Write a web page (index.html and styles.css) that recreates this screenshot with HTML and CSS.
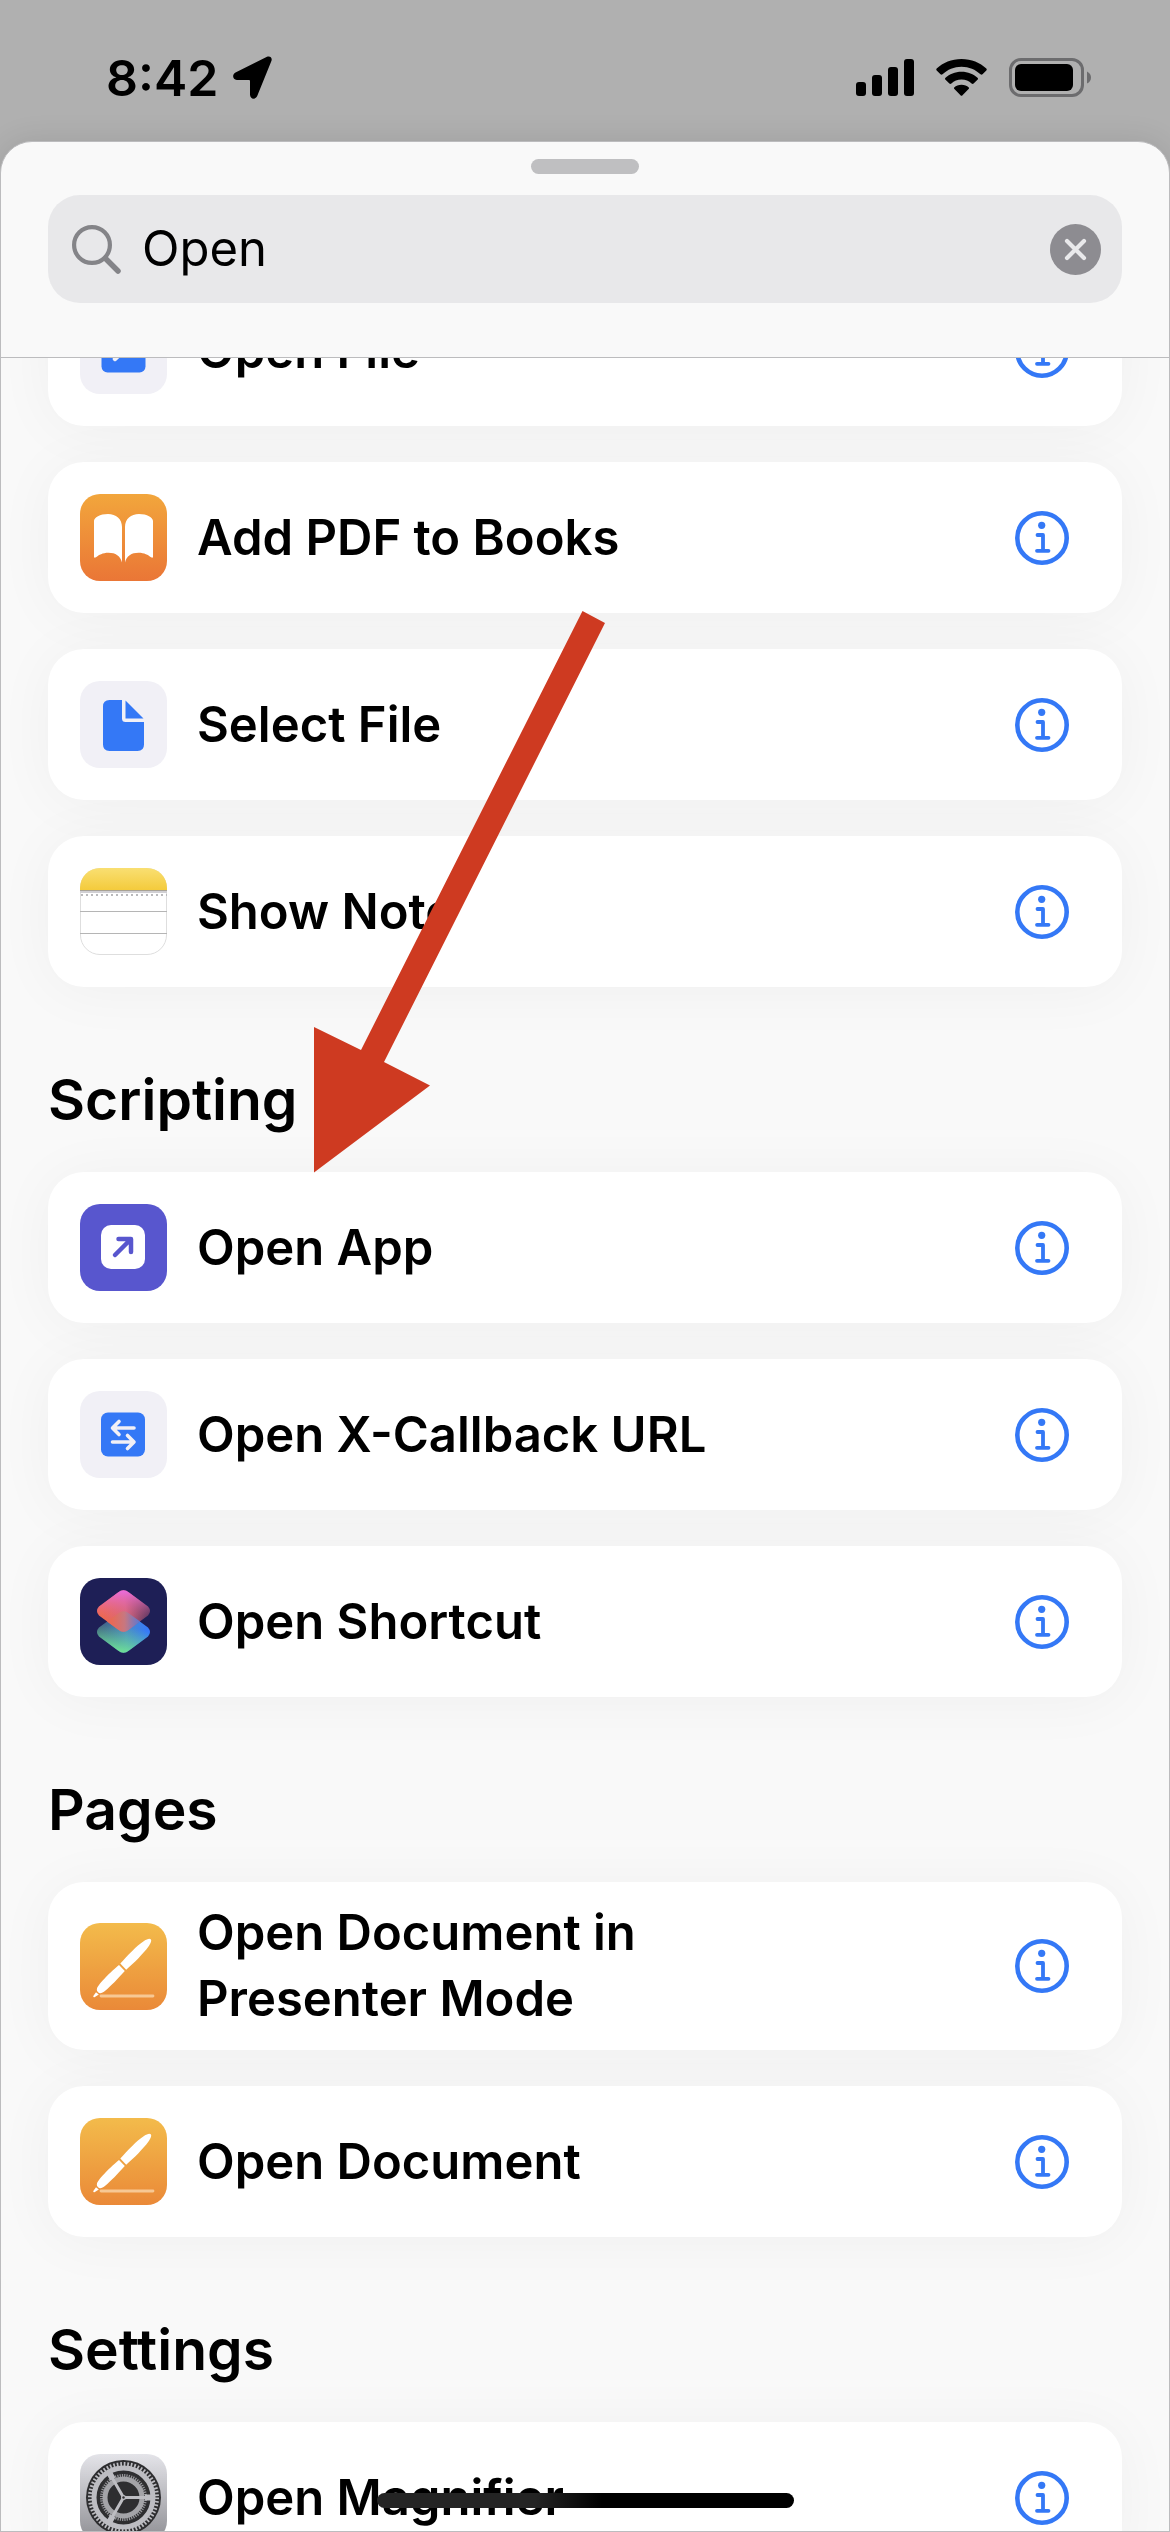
FILE: index.html
```html
<!DOCTYPE html>
<html lang="en">
<head>
<meta charset="utf-8">
<meta name="viewport" content="width=device-width, initial-scale=1">
<title>Shortcuts – Add Action</title>
<link rel="stylesheet" href="styles.css">
</head>
<body>
<svg class="defs" aria-hidden="true">
  <defs>
    <linearGradient id="books-bg" x1="0" y1="0" x2="0" y2="1"><stop offset="0" stop-color="#f2a63c"/><stop offset="1" stop-color="#ea7636"/></linearGradient>
    <linearGradient id="notes-bg" x1="0" y1="0" x2="0" y2="1"><stop offset="0" stop-color="#f9df72"/><stop offset="1" stop-color="#f4cb3c"/></linearGradient>
    <linearGradient id="pages-bg" x1="0" y1="0" x2="0" y2="1"><stop offset="0" stop-color="#f3bb4b"/><stop offset="1" stop-color="#ea8938"/></linearGradient>
    <linearGradient id="gear-bg" x1="0" y1="0" x2="0" y2="1"><stop offset="0" stop-color="#e4e4e9"/><stop offset="1" stop-color="#8e8e93"/></linearGradient>
    <linearGradient id="sc-base" x1="0.1" y1="0.6" x2="1" y2="0.5"><stop offset="0" stop-color="#ee684f"/><stop offset="0.5" stop-color="#d6657e"/><stop offset="1" stop-color="#4a305f"/></linearGradient>
    <linearGradient id="sc-pink" x1="0.5" y1="0" x2="0.5" y2="1"><stop offset="0" stop-color="#ea6be0"/><stop offset="0.7" stop-color="#e56a80" stop-opacity="0"/></linearGradient>
    <linearGradient id="sc-blue" x1="0" y1="0.5" x2="1" y2="0.5"><stop offset="0" stop-color="#3c4b78"/><stop offset="0.55" stop-color="#4b8bc4"/><stop offset="1" stop-color="#3478ff"/></linearGradient>
    <linearGradient id="sc-green" x1="0.6" y1="0.3" x2="0.4" y2="1"><stop offset="0.1" stop-color="#5fd39b" stop-opacity="0"/><stop offset="1" stop-color="#72e694"/></linearGradient>
    <linearGradient id="sc-overlap" x1="0.15" y1="0.5" x2="1" y2="0.5"><stop offset="0" stop-color="#e86a55"/><stop offset="0.45" stop-color="#c57a80"/><stop offset="1" stop-color="#4f7fe6"/></linearGradient>
    <symbol id="info" viewBox="0 0 54 54">
      <circle cx="27" cy="27" r="24.7" fill="none" stroke="#3478f6" stroke-width="4.6"/>
      <circle cx="26.7" cy="14.3" r="3.6" fill="#3478f6"/>
      <path d="M22.5 24H28V39.8M22 39.8H33.5" fill="none" stroke="#3478f6" stroke-width="3.8" stroke-linecap="round" stroke-linejoin="round"/>
    </symbol>
    <symbol id="pages" viewBox="0 0 87 87">
      <rect width="87" height="87" rx="20" fill="url(#pages-bg)"/>
      <path d="M21 73H73" stroke="#f7c894" stroke-width="2.8" stroke-linecap="round"/>
      <path d="M40.3 40.6C47 33 57 22.500 64 18C67 16 69.500 15 70.700 16.200C72 17.500 70.500 20.500 68.500 23.500C63 31 54 40 46.200 46.700ZM39 42L44.800 48C38 55.500 31 63 25.500 67.500C23 69.500 21 70.600 19.800 70.200C17.500 69.500 16.300 67.500 17 65.500C18.500 61 31 48.500 39 42ZM16 69.200L18.800 71.500L14.500 74.200Q13 74.500 13.300 73Z" fill="#fff"/>
    </symbol>
  </defs>
</svg>

<div class="status">
  <span class="time">8:42</span>
  <svg class="location" viewBox="0 0 39 43" width="39" height="43" aria-hidden="true"><path d="M34 .8 2.500 16.600C-1.200 18.500-.4 24 3.800 24H16Q17 24 17 25V38.500C17 43.500 22.500 44 24.200 40L38.400 5C39.600 1.700 37-.6 34 .8Z"/></svg>
  <div class="indicators">
    <svg viewBox="0 0 58 38" width="58" height="38" aria-hidden="true"><rect y="23" width="10" height="14" rx="3"/><rect x="16" y="16" width="10" height="21" rx="3"/><rect x="32" y="8" width="10" height="29" rx="3"/><rect x="48" width="10" height="37" rx="3"/></svg>
    <svg viewBox="0 0 51 38" width="51" height="38" aria-hidden="true"><path d="M25.500 0C35.500 0 44 3.600 50.300 9.600Q51.200 10.500 50.300 11.500L46.500 15.300Q45.500 16.200 44.500 15.300C39.500 10.500 33 7.700 25.500 7.700S11.500 10.500 6.500 15.300Q5.500 16.200 4.500 15.300L.7 11.500Q-.2 10.500.7 9.600C7 3.600 15.500 0 25.500 0ZM25.500 12.800C32 12.800 37.500 15.200 41.500 18.800Q42.500 19.800 41.500 20.700L37.600 24.500Q36.700 25.400 35.600 24.500C33 22 29.500 20.500 25.500 20.500S18 22 15.400 24.500Q14.300 25.400 13.400 24.500L9.500 20.700Q8.500 19.800 9.500 18.800C13.500 15.200 19 12.800 25.500 12.800ZM25.500 25.800C28.500 25.800 31 26.800 32.600 28.300Q33.400 29.200 32.600 30L26.500 36.200Q25.500 37.200 24.500 36.200L18.400 30Q17.600 29.200 18.400 28.300C20 26.800 22.500 25.800 25.500 25.800Z"/></svg>
    <svg viewBox="0 0 82 39" width="82" height="39" aria-hidden="true"><rect x="1.500" y="1.500" width="72" height="36" rx="10.500" fill="none" stroke="#6c6c6e" stroke-width="3"/><rect x="6" y="6" width="58" height="27" rx="6"/><path d="M78 13.500Q82 15.500 82 19.500T78 25.500Z" fill="#6c6c6e"/></svg>
  </div>
</div>

<main class="sheet">
  <header class="sheet-header">
    <div class="grabber"></div>
    <form class="search" role="search">
      <svg viewBox="0 0 49 49" width="49" height="49" aria-hidden="true"><g fill="none" stroke="#848488" stroke-linecap="round"><circle cx="20" cy="20" r="17.900" stroke-width="4.200"/><path d="M33.500 33.500 46 46" stroke-width="5.500"/></g></svg>
      <input type="search" value="Open" aria-label="Search actions">
      <button type="reset" aria-label="Clear search">
        <svg viewBox="0 0 51 51" width="51" height="51"><circle cx="25.500" cy="25.500" r="25.500" fill="#8d8c91"/><path d="M17 17 34 34M34 17 17 34" stroke="#e9e9eb" stroke-width="4.200" stroke-linecap="round"/></svg>
      </button>
    </form>
  </header>

  <div class="results">
    <ul class="list list-scrolled">
      <li class="card">
        <svg class="icon" viewBox="0 0 87 87"><rect width="87" height="87" rx="20" fill="#f1f0f6"/><rect x="21.500" y="21.500" width="44" height="44" rx="6" fill="#3478f6"/><path d="M35 52 51 36M38.500 35.500H51.500V48.500" fill="none" stroke="#f1f0f6" stroke-width="4.500" stroke-linecap="round" stroke-linejoin="round"/></svg>
        <span class="name">Open File</span>
        <button class="info" aria-label="About Open File"><svg width="54" height="54"><use href="#info"/></svg></button>
      </li>
      <li class="card">
        <svg class="icon" viewBox="0 0 87 87"><rect width="87" height="87" rx="20" fill="url(#books-bg)"/><path d="M14 27C14 23.500 20 20 28 20C36 20 42 25 42 33V68.500C40.500 62 35.500 58.800 28.500 58.800C22.500 58.800 19 61 16 63.300Q14 64.500 14 62.500ZM73 27C73 23.500 67 20 59 20C51 20 45 25 45 33V68.500C46.500 62 51.500 58.800 58.500 58.800C64.500 58.800 68 61 71 63.300Q73 64.500 73 62.500Z" fill="#fff"/></svg>
        <span class="name">Add PDF to Books</span>
        <button class="info" aria-label="About Add PDF to Books"><svg width="54" height="54"><use href="#info"/></svg></button>
      </li>
      <li class="card">
        <svg class="icon" viewBox="0 0 87 87"><rect width="87" height="87" rx="20" fill="#f1f0f6"/><path d="M29.500 19H42V37.500Q42 41 45.500 41H64V63.500Q64 70 57.500 70H29.500Q23 70 23 63.500V25.500Q23 19 29.500 19ZM45.500 19.500 63.500 37.500H45.500Z" fill="#3478f6"/></svg>
        <span class="name">Select File</span>
        <button class="info" aria-label="About Select File"><svg width="54" height="54"><use href="#info"/></svg></button>
      </li>
      <li class="card">
        <svg class="icon" viewBox="0 0 87 87"><rect x=".5" y=".5" width="86" height="86" rx="19.500" fill="#fff" stroke="#dedede"/><path d="M0 22V20A20 20 0 0 1 20 0H67A20 20 0 0 1 87 20V22Z" fill="url(#notes-bg)"/><path d="M0 22.500H87" stroke="#a8a294"/><path d="M0 24H87" stroke="#d0cfd3" stroke-width="2"/><path d="M1 27H87" stroke="#b9b9bb" stroke-width="2" stroke-dasharray="2 3"/><path d="M0 43.500H87M0 65.500H87" stroke="#b5b5b5"/></svg>
        <span class="name">Show Note</span>
        <button class="info" aria-label="About Show Note"><svg width="54" height="54"><use href="#info"/></svg></button>
      </li>
    </ul>

    <h2>Scripting</h2>
    <ul class="list">
      <li class="card">
        <svg class="icon" viewBox="0 0 87 87"><rect width="87" height="87" rx="20" fill="#5856ce"/><rect x="21" y="21" width="44" height="44" rx="10" fill="#fff"/><path d="M35 51 50.500 35.500M38.500 35H51V48" fill="none" stroke="#5856ce" stroke-width="4.500" stroke-linecap="round" stroke-linejoin="round"/></svg>
        <span class="name">Open App</span>
        <button class="info" aria-label="About Open App"><svg width="54" height="54"><use href="#info"/></svg></button>
      </li>
      <li class="card">
        <svg class="icon" viewBox="0 0 87 87"><rect width="87" height="87" rx="20" fill="#f1f0f6"/><rect x="21" y="21.500" width="44" height="44" rx="7" fill="#3478f6"/><path d="M54 37H33M39 30.500 32.500 37 39 43.500M32.500 51H53.500M47.500 44.500 54 51 47.500 57.500" fill="none" stroke="#f1f0f6" stroke-width="3.600" stroke-linecap="round" stroke-linejoin="round"/></svg>
        <span class="name">Open X-Callback URL</span>
        <button class="info" aria-label="About Open X-Callback URL"><svg width="54" height="54"><use href="#info"/></svg></button>
      </li>
      <li class="card">
        <svg class="icon" viewBox="0 0 87 87"><rect width="87" height="87" rx="20" fill="#1e1f56"/><path d="M38 35.500Q43.500 31 49 35.500L68 49.500Q72 54 68 58.500L49 72.500Q43.500 77 38 72.500L19 58.500Q15 54 19 49.500Z" fill="url(#sc-blue)"/><path d="M38 35.500Q43.500 31 49 35.500L68 49.500Q72 54 68 58.500L49 72.500Q43.500 77 38 72.500L19 58.500Q15 54 19 49.500Z" fill="url(#sc-green)"/><path d="M38 14.500Q43.500 10 49 14.500L68 28.500Q72 33 68 37.500L49 51.500Q43.500 56 38 51.500L19 37.500Q15 33 19 28.500Z" fill="url(#sc-base)"/><path d="M38 14.500Q43.500 10 49 14.500L68 28.500Q72 33 68 37.500L49 51.500Q43.500 56 38 51.500L19 37.500Q15 33 19 28.500Z" fill="url(#sc-pink)"/><path d="M38 35.500Q43.500 31 49 35.500L60 43.500 49 51.500Q43.500 56 38 51.500L27 43.500Z" fill="url(#sc-overlap)" opacity=".85"/></svg>
        <span class="name">Open Shortcut</span>
        <button class="info" aria-label="About Open Shortcut"><svg width="54" height="54"><use href="#info"/></svg></button>
      </li>
    </ul>

    <h2>Pages</h2>
    <ul class="list">
      <li class="card">
        <svg class="icon"><use href="#pages"/></svg>
        <span class="name">Open Document in<br>Presenter Mode</span>
        <button class="info" aria-label="About Open Document in Presenter Mode"><svg width="54" height="54"><use href="#info"/></svg></button>
      </li>
      <li class="card">
        <svg class="icon"><use href="#pages"/></svg>
        <span class="name">Open Document</span>
        <button class="info" aria-label="About Open Document"><svg width="54" height="54"><use href="#info"/></svg></button>
      </li>
    </ul>

    <h2>Settings</h2>
    <ul class="list">
      <li class="card">
        <svg class="icon" viewBox="0 0 87 87">
          <rect width="87" height="87" rx="20" fill="url(#gear-bg)"/>
          <circle cx="43.500" cy="43.500" r="37.500" fill="#2e2e30"/>
          <g fill="none" stroke="#bdbdc2">
            <circle cx="43.500" cy="43.500" r="33.500" stroke-width="4" stroke-dasharray="1.700 1.808"/>
            <circle cx="43.500" cy="43.500" r="29.500" stroke-width="5"/>
            <circle cx="43.500" cy="43.500" r="22" stroke="#98989c" stroke-width="3" stroke-dasharray="1.200 1.104"/>
            <circle cx="43.500" cy="43.500" r="18.500" stroke="#a4a4a8" stroke-width="5"/>
            <path d="M43.500 43.500H72M43.500 43.500 29.200 18.800M43.500 43.500 29.200 68.200" stroke-width="3"/>
            <path d="M65 43.500H73M32.800 25 28.800 18M32.800 62 28.800 69" stroke-width="6"/>
          </g>
          <circle cx="43.500" cy="43.500" r="2.500" fill="#bdbdc2"/><circle cx="43.500" cy="43.500" r="1.200" fill="#2e2e30"/>
        </svg>
        <span class="name">Open Magnifier</span>
        <button class="info" aria-label="About Open Magnifier"><svg width="54" height="54"><use href="#info"/></svg></button>
      </li>
    </ul>
  </div>
</main>

<svg class="pointer" viewBox="0 0 292 562" width="292" height="562" aria-hidden="true"><path d="M268.500 0 291 12 70 451 116 474.500 0 561.500V416L47 439Z" fill="#ce3a21"/></svg>
<div class="home-indicator"></div>
</body>
</html>
```
FILE: styles.css
```css
* {
  box-sizing: border-box;
}

body {
  margin: 0;
  height: 100vh;
  display: flex;
  flex-direction: column;
  overflow: hidden;
  background: #b0b0b0;
  color: #000;
  font-family: Inter, "Liberation Sans", sans-serif;
}

svg {
  display: block;
}

.defs {
  position: absolute;
  width: 0;
  height: 0;
}

button {
  padding: 0;
  border: 0;
  background: none;
}

/* Status bar */
.status {
  flex: none;
  display: flex;
  align-items: center;
  padding: 56px 79px 42px 106px;
}

.time {
  font-size: 50px;
  font-weight: 600;
  line-height: 42px;
}

.location {
  margin-left: 15px;
}

.indicators {
  display: flex;
  align-items: center;
  gap: 22px;
  margin-left: auto;
}

/* Sheet */
.sheet {
  flex: 1;
  min-height: 0;
  display: flex;
  flex-direction: column;
  overflow: hidden;
  border: 1px solid #bcbcbe;
  border-radius: 32px 32px 0 0;
  background: #f9f9f9;
  box-shadow: 0 0 30px rgba(0, 0, 0, 0.1);
}

.sheet-header {
  flex: none;
  padding: 17px 47px 54px;
  border-bottom: 1px solid #bcbcbe;
}

.grabber {
  width: 108px;
  height: 15px;
  margin: 0 auto 21px;
  border-radius: 8px;
  background: #bfbfc1;
}

.search {
  display: flex;
  align-items: center;
  gap: 21px;
  height: 108px;
  padding: 0 21px 0 24px;
  border-radius: 32px;
  background: #e8e8ea;
}

.search input {
  flex: 1;
  min-width: 0;
  padding: 0;
  border: 0;
  outline: 0;
  appearance: none;
  background: none;
  color: #000;
  font: 400 49px/60px Inter, "Liberation Sans", sans-serif;
}

.search input::-webkit-search-cancel-button {
  display: none;
}

/* Results */
.results {
  flex: 1;
  min-height: 0;
  overflow: hidden;
  padding: 0 47px;
}

h2 {
  margin: 0;
  padding: 83px 0 42px;
  font-size: 57px;
  font-weight: 600;
  line-height: 60px;
}

.list {
  display: flex;
  flex-direction: column;
  gap: 36px;
  margin: 0;
  padding: 0;
  list-style: none;
}

/* The list is scrolled part-way past its first card. */
.list-scrolled {
  margin-top: -83px;
}

.card {
  display: flex;
  align-items: center;
  gap: 30px;
  min-height: 151px;
  padding: 18px 53px 18px 32px;
  border-radius: 36px;
  background: #fff;
  box-shadow: 0 4px 60px rgba(0, 0, 0, 0.045);
}

.icon {
  flex: none;
  width: 87px;
  height: 87px;
}

.name {
  flex: 1;
  font-size: 49px;
  font-weight: 600;
  line-height: 66px;
}

.info {
  flex: none;
}

/* Overlays */
.pointer {
  position: absolute;
  top: 611px;
  left: 314px;
}

.home-indicator {
  position: fixed;
  bottom: 24px;
  left: 50%;
  width: 417px;
  height: 15px;
  margin-left: -208px;
  border-radius: 8px;
  background: linear-gradient(90deg, #242424 38%, #000 54%);
}
```
